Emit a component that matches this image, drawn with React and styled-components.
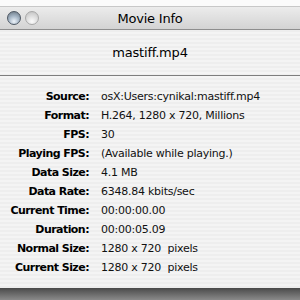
import React from 'react'
import styled, { createGlobalStyle } from 'styled-components'

const GlobalStyle = createGlobalStyle`
  html, body {
    margin: 0;
    padding: 0;
    width: 300px;
    height: 300px;
    overflow: hidden;
    background: #fcfcfc;
  }
`

const Window = styled.div`
  width: 300px;
  height: 300px;
  display: flex;
  flex-direction: column;
  font-family: "DejaVu Sans", "Liberation Sans", sans-serif;
  color: #000;
`

const TopGap = styled.div`
  height: 6px;
  background: #fbfbfb;
`

const TitleBar = styled.div`
  position: relative;
  height: 22px;
  display: flex;
  align-items: center;
  justify-content: center;
  background: linear-gradient(#ececec, #d3d3d3);
  border-top: 1px solid #c8c8c8;
  border-bottom: 1px solid #8e8e8e;
`

const Lights = styled.div`
  position: absolute;
  left: 7px;
  top: 4px;
  display: flex;
  gap: 4px;
`

const Light = styled.div`
  width: 14px;
  height: 14px;
  border-radius: 50%;
  box-sizing: border-box;
  border: 1px solid ${p => (p.active ? '#4e5864' : '#a8a8a8')};
  background: ${p =>
    p.active
      ? 'radial-gradient(circle at 50% 78%, #eef4fa 0%, #a9b9c9 45%, #66737f 100%)'
      : 'radial-gradient(circle at 50% 78%, #fbfbfb 0%, #dddddd 50%, #bdbdbd 100%)'};
`

const Title = styled.div`
  font-size: 13px;
  letter-spacing: -0.2px;
`

const Body = styled.div`
  flex: 1;
  background: repeating-linear-gradient(
    #eeeeee 0px,
    #eeeeee 2px,
    #f4f4f4 2px,
    #f4f4f4 4px
  );
  display: flex;
  flex-direction: column;
`

const FileName = styled.div`
  height: 45px;
  display: flex;
  align-items: center;
  justify-content: center;
  font-size: 13px;
  letter-spacing: -0.2px;
  border-bottom: 1px solid #7d7d7d;
`

const Rows = styled.div`
  padding-top: 11px;
  display: grid;
  grid-template-columns: 89px 1fr;
  column-gap: 12px;
  font-size: 11px;
`

const Label = styled.div`
  font-weight: bold;
  text-align: right;
  height: 19px;
  line-height: 19px;
  letter-spacing: -0.55px;
  white-space: nowrap;
`

const Value = styled.div`
  height: 19px;
  line-height: 19px;
  letter-spacing: -0.25px;
  color: #111;
  white-space: pre;
`

const Shadow = styled.div`
  height: 12px;
  background: linear-gradient(#4a4a4a, #8a8a8a);
`

const rows = [
  ['Source:', 'osX:Users:cynikal:mastiff.mp4'],
  ['Format:', 'H.264, 1280 x 720, Millions'],
  ['FPS:', '30'],
  ['Playing FPS:', '(Available while playing.)'],
  ['Data Size:', '4.1 MB'],
  ['Data Rate:', '6348.84 kbits/sec'],
  ['Current Time:', '00:00:00.00'],
  ['Duration:', '00:00:05.09'],
  ['Normal Size:', '1280 x 720  pixels'],
  ['Current Size:', '1280 x 720  pixels'],
]

const App = () => (
  <>
    <GlobalStyle />
    <Window>
      <TopGap />
      <TitleBar>
        <Lights>
          <Light active />
          <Light />
        </Lights>
        <Title>Movie Info</Title>
      </TitleBar>
      <Body>
        <FileName>mastiff.mp4</FileName>
        <Rows>
          {rows.map(([label, value]) => (
            <React.Fragment key={label}>
              <Label>{label}</Label>
              <Value>{value}</Value>
            </React.Fragment>
          ))}
        </Rows>
      </Body>
      <Shadow />
    </Window>
  </>
)

export default App
